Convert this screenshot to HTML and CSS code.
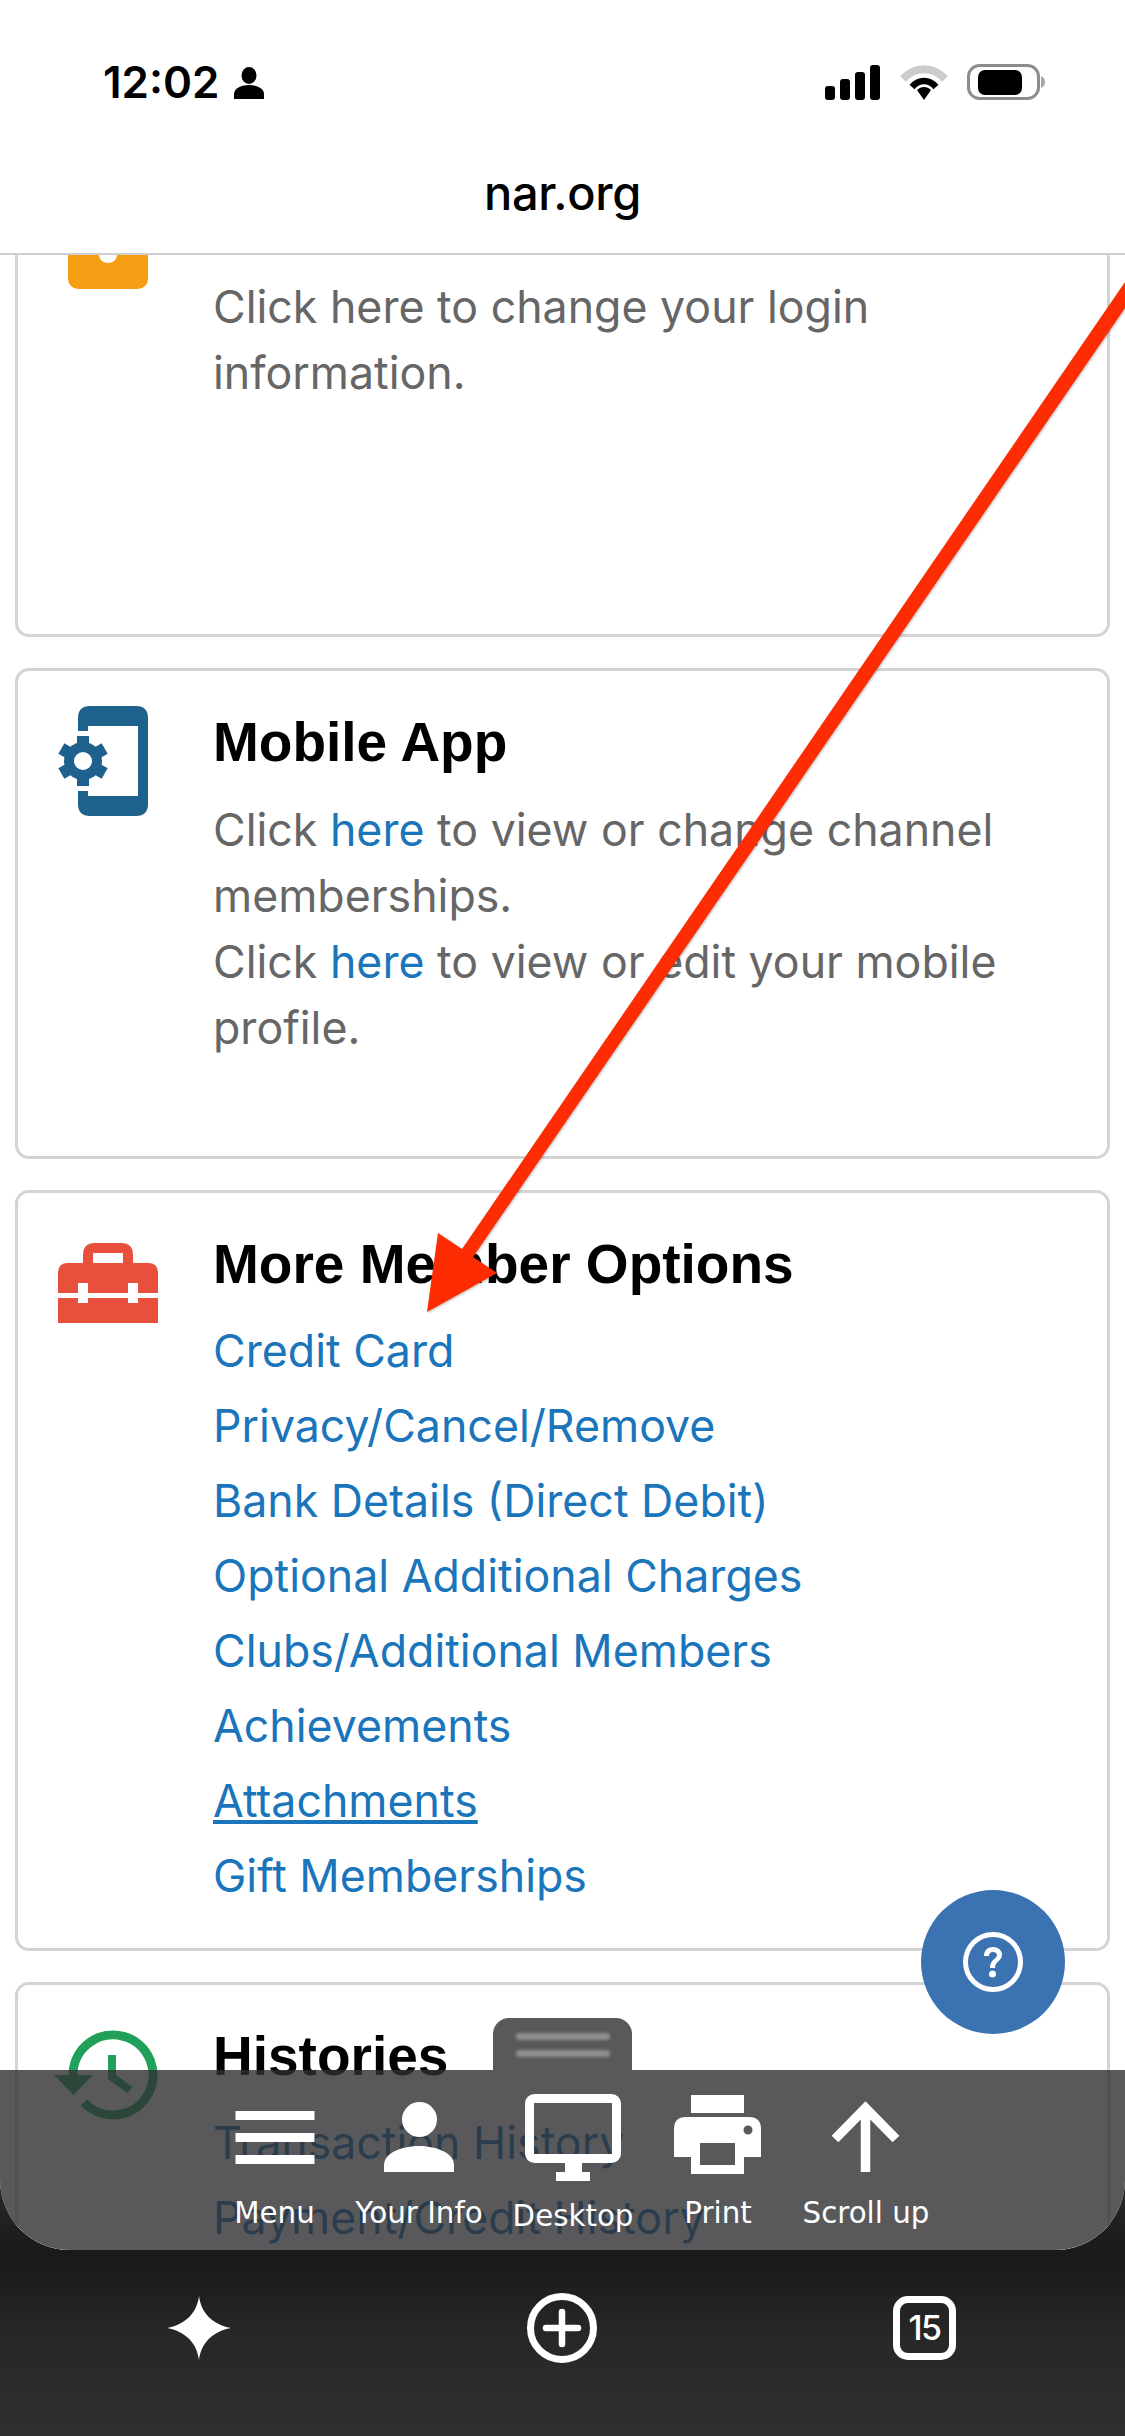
FILE: index.html
```html
<!DOCTYPE html>
<html lang="en">
<head>
<meta charset="utf-8">
<title>nar.org</title>
<link rel="stylesheet" href="styles.css">
</head>
<body>
<div class="page">
  <header class="chrome">
    <div class="status">
      <div class="status-left">
        <span class="time">12:02</span>
        <svg class="person" width="30" height="32" viewBox="0 0 30 32"><ellipse cx="15" cy="8.5" rx="7.5" ry="8.5"/><path d="M0 32V27C0 21 8 18 15 18S30 21 30 27V32Z"/></svg>
      </div>
      <div class="status-right">
        <svg width="56" height="36" viewBox="0 0 56 36"><rect x="0" y="22" width="10" height="14" rx="3"/><rect x="15" y="15" width="10" height="21" rx="3"/><rect x="30" y="8" width="10" height="28" rx="3"/><rect x="45" y="1" width="10" height="35" rx="3"/></svg>
        <svg width="50" height="36" viewBox="0 0 50 36"><path d="M4 15C16 2 34 2 46 15" fill="none" stroke="#ccc" stroke-width="8"/><path d="M13 23C20 15 30 15 37 23" fill="none" stroke="#000" stroke-width="6.5"/><path d="M18 26C22 22 28 22 32 26L25 36Z"/></svg>
        <svg width="78" height="36" viewBox="0 0 78 36"><rect x="1.5" y="1.5" width="70" height="33" rx="11" fill="none" stroke="#8c8c8c" stroke-width="3"/><rect x="11" y="6" width="44" height="25" rx="7"/><path d="M74 12C77 13 78 15 78 18S77 23 74 24Z" fill="#aaa"/></svg>
      </div>
    </div>
    <div class="url">nar.org</div>
  </header>

  <main class="viewport">
    <div class="scroller">
      <section class="card card-login">
        <svg class="card-icon" width="120" height="120" viewBox="0 0 120 120"><rect x="20" y="16" width="80" height="80" rx="10" fill="#f59e14"/><ellipse cx="60" cy="62" rx="9" ry="8" fill="#fff"/></svg>
        <div class="card-body body-login">
          <p class="copy">Click here to change your login information.</p>
        </div>
      </section>

      <section class="card card-mobile">
        <svg class="card-icon" width="120" height="120" viewBox="0 0 120 120">
          <path fill="#1f618d" d="M42 5H88Q100 5 100 17V103Q100 115 88 115H42Q30 115 30 103V90H40V95H90V25H40V30H30V17Q30 5 42 5Z"/>
          <g fill="#1f618d" transform="translate(35 60)">
            <circle r="19"/>
            <rect x="-6" y="-25" width="12" height="12"/>
            <rect x="-6" y="-25" width="12" height="12" transform="rotate(60)"/>
            <rect x="-6" y="-25" width="12" height="12" transform="rotate(120)"/>
            <rect x="-6" y="-25" width="12" height="12" transform="rotate(180)"/>
            <rect x="-6" y="-25" width="12" height="12" transform="rotate(240)"/>
            <rect x="-6" y="-25" width="12" height="12" transform="rotate(300)"/>
            <circle r="9" fill="#fff"/>
          </g>
        </svg>
        <div class="card-body">
          <h2 class="title title-copy">Mobile App</h2>
          <p class="copy">Click <a class="link" href="#">here</a> to view or change channel memberships.<br>Click <a class="link" href="#">here</a> to view or edit your mobile profile.</p>
        </div>
      </section>

      <section class="card">
        <svg class="card-icon" width="120" height="120" viewBox="0 0 120 120">
          <path fill="#e94f3d" d="M35 40V32Q35 20 47 20H73Q85 20 85 32V40H100Q110 40 110 50V70H90V60H80V70H40V60H30V70H10V50Q10 40 20 40ZM45 40H75V30H45Z" fill-rule="evenodd"/>
          <path fill="#e94f3d" d="M10 75H30V80H40V75H80V80H90V75H110V100H10Z"/>
        </svg>
        <div class="card-body">
          <h2 class="title">More Member Options</h2>
          <ul class="links">
            <li><a class="link" href="#">Credit Card</a></li>
            <li><a class="link" href="#">Privacy/Cancel/Remove</a></li>
            <li><a class="link" href="#">Bank Details (Direct Debit)</a></li>
            <li><a class="link" href="#">Optional Additional Charges</a></li>
            <li><a class="link" href="#">Clubs/Additional Members</a></li>
            <li><a class="link" href="#">Achievements</a></li>
            <li><a class="link link-under" href="#">Attachments</a></li>
            <li><a class="link" href="#">Gift Memberships</a></li>
          </ul>
        </div>
      </section>

      <section class="card">
        <svg class="card-icon" width="120" height="120" viewBox="0 0 120 120">
          <path d="M25 60A40 40 0 1 1 36 87.500" fill="none" stroke="#21a05a" stroke-width="9"/>
          <path d="M6 60H45L25.500 80Z" fill="#21a05a"/>
          <path d="M64 40V62L82 75" fill="none" stroke="#21a05a" stroke-width="8"/>
        </svg>
        <div class="card-body">
          <h2 class="title">Histories</h2>
          <ul class="links">
            <li><a class="link" href="#">Transaction History</a></li>
            <li><a class="link" href="#">Payment/Credit History</a></li>
          </ul>
        </div>
      </section>
    </div>

    <button class="help" type="button" aria-label="Help">
      <svg width="60" height="60" viewBox="0 0 60 60"><circle cx="30" cy="30" r="27.500" fill="none" stroke="#fff" stroke-width="5"/><path d="M21 24C21 18 25 15 30 15C36 15 39 19 39 23C39 29 32 29 32 36H27C27 27 34 27 34 23C34 21 32 20 30 20C27 20 26 22 26 24Z" fill="#fff"/><circle cx="29.500" cy="42" r="3.500" fill="#fff"/></svg>
    </button>

    <nav class="dock">
      <div class="dock-tab"><span class="tab-line"></span><span class="tab-line"></span></div>
      <div class="dock-item">
        <svg width="100" height="100" viewBox="0 0 100 100" fill="#fff"><rect x="10.500" y="21" width="79" height="9"/><rect x="10.500" y="43" width="79" height="9"/><rect x="10.500" y="65" width="79" height="9"/></svg>
        <span class="dock-label">Menu</span>
      </div>
      <div class="dock-item">
        <svg width="100" height="100" viewBox="0 0 100 100" fill="#fff"><ellipse cx="50.500" cy="29.500" rx="17.500" ry="17.500"/><path d="M15 82V75C15 62 35 56 50 56S85 62 85 75V82Z"/></svg>
        <span class="dock-label">Your Info</span>
      </div>
      <div class="dock-item">
        <svg width="100" height="100" viewBox="0 0 100 100" fill="#fff"><rect x="6.500" y="8.500" width="87" height="60" rx="5" fill="none" stroke="#fff" stroke-width="9"/><rect x="42" y="73" width="17" height="9"/><rect x="33" y="82" width="34" height="9"/></svg>
        <span class="dock-label label-low">Desktop</span>
      </div>
      <div class="dock-item">
        <svg width="100" height="100" viewBox="0 0 100 100" fill="#fff"><rect x="23" y="5" width="53" height="18"/><path fill-rule="evenodd" d="M6 67V39Q6 27 18 27H81Q93 27 93 39V67H76V84H23V67ZM32 53V75H67V53ZM75.500 40A4.500 4.500 0 1 0 84.500 40A4.500 4.500 0 1 0 75.500 40Z"/></svg>
        <span class="dock-label">Print</span>
      </div>
      <div class="dock-item">
        <svg width="100" height="100" viewBox="0 0 100 100"><path d="M19 49L49.500 18L80 49M49.500 18V82" fill="none" stroke="#fff" stroke-width="9.500"/></svg>
        <span class="dock-label">Scroll up</span>
      </div>
    </nav>
  </main>

  <footer class="toolbar">
    <svg width="64" height="64" viewBox="0 0 64 64"><path fill="#fff" d="M32 0C34 16 44 28 64 32C44 36 34 48 32 64C30 48 20 36 0 32C20 28 30 16 32 0Z"/></svg>
    <svg width="70" height="70" viewBox="0 0 70 70"><circle cx="35" cy="35" r="31.500" fill="none" stroke="#fff" stroke-width="7"/><path d="M19 35H51M35 19V51" stroke="#fff" stroke-width="6.500" stroke-linecap="round"/></svg>
    <div class="tabs">15</div>
  </footer>

  <svg class="arrow" width="1125" height="2436" viewBox="0 0 1125 2436">
    <path fill="#fe2c02" d="M1125 282V308L473 1257L497 1273L427 1312L438 1233L462 1249Z"/>
  </svg>
</div>
</body>
</html>
```
FILE: styles.css
```css
* { box-sizing: border-box; }
html, body { margin: 0; padding: 0; }
body { width: 1125px; height: 2436px; overflow: hidden; background: #000; font-family: "Inter", "Liberation Sans", sans-serif; }
.page { position: relative; width: 1125px; height: 2436px; display: flex; flex-direction: column; background: linear-gradient(#2c2c2c 2170px, #1a1a1a 2250px); overflow: hidden; }

.chrome { position: relative; z-index: 2; height: 255px; background: #fff; border-bottom: 2px solid #cfcfcf; flex: none; }
.status { display: flex; justify-content: space-between; align-items: flex-start; height: 100px; padding: 64px 80px 0 103px; }
.status-left { display: flex; align-items: center; gap: 14px; height: 36px; }
.time { font: 600 44px/36px "Inter", "Liberation Sans", sans-serif; color: #000; }
.person { margin-top: 1px; }
.status-right { display: flex; gap: 18px; align-items: flex-start; }
.url { margin-top: 63px; text-align: center; font: 500 47px/60px "Inter", "Liberation Sans", sans-serif; color: #000; letter-spacing: -.3px; }

.viewport { position: relative; flex: none; height: 1995px; background: #fff; border-radius: 0 0 70px 70px; overflow: hidden; }
.scroller { display: flex; flex-direction: column; gap: 31px; margin-top: -95px; padding: 0 15px; }

.card { display: flex; gap: 45px; padding: 30px 30px 34px; background: #fff; border: 3px solid #d4d4d4; border-radius: 14px; flex: none; }
.card-login { min-height: 477px; }
.card-mobile { min-height: 491px; }
.card-icon { flex: none; overflow: visible; }
.card-body { flex: 1; min-width: 0; padding-top: 8px; }
.body-login { padding-top: 81px; }
.title { margin: 0 0 17px; font: 700 55px/66px "Liberation Sans", Arial, sans-serif; color: #000; }
.title-copy { margin-bottom: 22px; }
.copy { margin: 0; font-size: 44.7px; line-height: 66px; color: #666; }
.links { list-style: none; margin: 0; padding: 0; font-size: 44.7px; line-height: 75px; }
.link { color: #1a75bb; text-decoration: none; }
.link-under { text-decoration: underline; }

.help { position: absolute; right: 60px; bottom: 216px; width: 144px; height: 144px; padding: 0; border: 0; border-radius: 50%; background: #3b73b2; display: flex; align-items: center; justify-content: center; z-index: 3; }

.dock { position: absolute; left: 0; right: 0; bottom: 0; height: 180px; display: grid; grid-template-columns: 130px 159px 149px 141px 155px; padding: 20px 0 0 209.5px; background: rgba(48, 48, 50, .8); z-index: 4; }
.dock-tab { position: absolute; left: 493px; top: -52px; width: 139px; height: 52px; padding-top: 15px; border-radius: 16px 16px 0 0; background: rgba(48, 48, 50, .8); display: flex; flex-direction: column; align-items: center; gap: 10px; }
.tab-line { display: block; width: 94px; height: 7px; border-radius: 3px; background: #8e8e8e; filter: blur(1.5px); }
.dock-item { display: flex; flex-direction: column; align-items: center; }
.dock-label { margin-top: 5px; font: 400 29.3px/36px "DejaVu Sans", sans-serif; color: #fff; white-space: nowrap; }
.label-low { margin-top: 8px; }

.toolbar { flex: 1; display: flex; align-items: center; justify-content: space-between; padding: 0 169px 30px 167px; background: linear-gradient(#1a1a1a 5%, #272727 45%, #2f2f30 100%); }
.tabs { width: 63px; height: 64px; border: 7px solid #fff; border-radius: 15px; display: flex; align-items: center; justify-content: center; font: 500 34px/1 "Inter", sans-serif; color: #fff; letter-spacing: -1.5px; }

.arrow { position: absolute; left: 0; top: 0; z-index: 1; pointer-events: none; filter: drop-shadow(1px 1px 1px rgba(0, 0, 0, .25)); }
```
